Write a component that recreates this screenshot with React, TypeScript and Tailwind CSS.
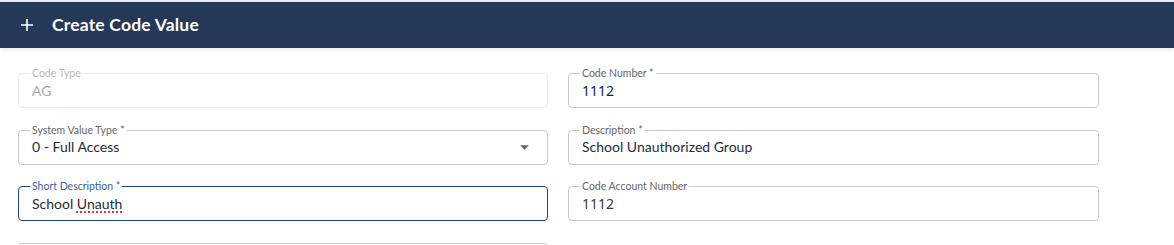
import type { ReactNode } from 'react'

const FONT = "font-['Lato','Noto_Sans',sans-serif]"

interface FieldProps {
  label: string
  value?: ReactNode
  disabled?: boolean
  focused?: boolean
  select?: boolean
  valueClass?: string
}

function Field({ label, value, disabled, focused, select, valueClass }: FieldProps) {
  const border = focused
    ? 'border-[#1c4585]'
    : disabled
      ? 'border-[#ececec]'
      : 'border-[#c9c9c9]'
  const labelColor = focused ? 'text-[#3b5f94]' : disabled ? 'text-[#b9b9b9]' : 'text-[#666]'
  return (
    <div className={`relative h-[35px] rounded-[4px] border ${border} flex items-center pl-[13px] pr-[18px]`}>
      {label && (
        <span
          className={`absolute -top-[7px] left-[11px] bg-white px-[2px] text-[10.5px] leading-[12px] ${labelColor}`}
        >
          {label}
        </span>
      )}
      <div className={`flex-1 text-[14px] leading-[18px] ${valueClass ?? (disabled ? 'text-[#a9a9a9]' : 'text-[#1d2b3f]')}`}>
        {value}
      </div>
      {select && (
        <svg width="9" height="5" viewBox="0 0 10 5" className="text-[#666]">
          <path d="M0 0l5 5 5-5z" fill="currentColor" />
        </svg>
      )}
    </div>
  )
}

export default function App() {
  return (
    <div className={`min-h-[245px] bg-white ${FONT}`}>
      <div className="border-t-2 border-[#e6e9ee] bg-[#253858] h-[48px] flex items-center pl-[20px] gap-[18px] shadow-[0_2px_4px_rgba(0,0,0,0.08)]">
        <svg width="14" height="14" viewBox="0 0 14 14" className="text-white">
          <path d="M7 1v12M1 7h12" stroke="currentColor" strokeWidth="1.6" />
        </svg>
        <h1 className="text-white text-[17.5px] font-bold tracking-[0.2px]">Create Code Value</h1>
      </div>

      <div className="grid grid-cols-[530px_531px] gap-x-[20px] gap-y-[21.5px] pl-[18px] pt-[25px]">
        <Field label="Code Type" value="AG" disabled />
        <Field
          label="Code Number *"
          value="1112"
          valueClass="text-[#10253f] font-['Noto_Sans',sans-serif]"
        />
        <Field label="System Value Type *" value="0 - Full Access" select />
        <Field label="Description *" value="School Unauthorized Group" />
        <Field
          label="Short Description *"
          focused
          value={
            <>
              School{' '}
              <span className="underline decoration-dotted decoration-[#e0393e] decoration-[1.5px] underline-offset-[3px]">
                Unauth
              </span>
            </>
          }
        />
        <Field
          label="Code Account Number"
          value="1112"
          valueClass="text-[#3a3a3a] font-['Noto_Sans',sans-serif]"
        />
        <Field label="" value="" />
        <div />
      </div>
    </div>
  )
}
